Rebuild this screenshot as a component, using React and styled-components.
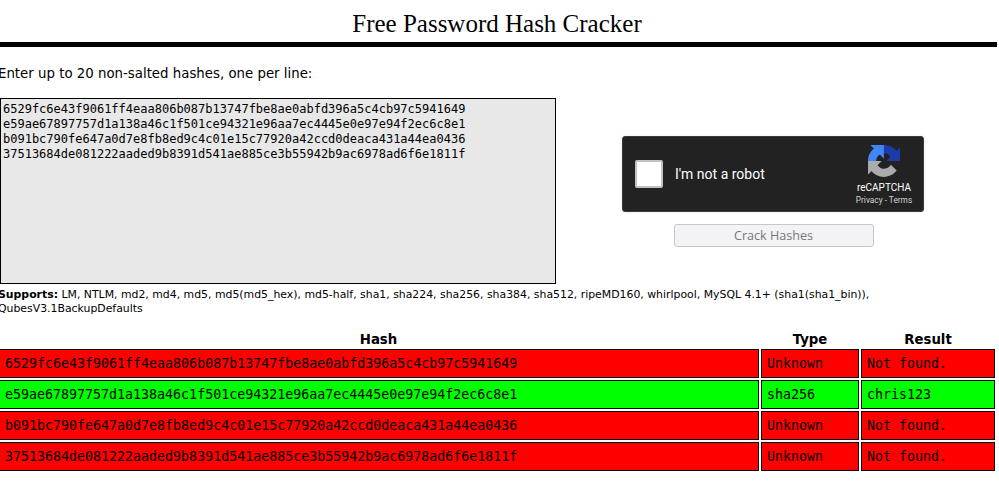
import React from 'react'
import styled, { createGlobalStyle } from 'styled-components'

const GlobalStyle = createGlobalStyle`
  html, body {
    margin: 0;
    padding: 0;
    background: #fff;
    overflow: hidden;
  }
  body {
    font-family: "DejaVu Sans", Verdana, sans-serif;
    color: #000;
  }
`

const Page = styled.div`
  width: 999px;
  height: 482px;
  overflow: hidden;
`

const Title = styled.h1`
  margin: 0;
  padding-top: 7px;
  width: 994px;
  height: 42px;
  box-sizing: border-box;
  font-family: "Liberation Serif", "Times New Roman", serif;
  font-weight: 400;
  font-size: 25px;
  line-height: 34px;
  text-align: center;
`

const Rule = styled.div`
  height: 5px;
  background: #000;
  width: 997px;
`

const Content = styled.div`
  margin-left: -2px;
  width: 999px;
`

const Prompt = styled.p`
  margin: 0;
  padding-top: 19px;
  font-size: 13.33px;
  line-height: 16px;
  height: 51px;
  box-sizing: border-box;
`

const FormRow = styled.div`
  display: flex;
  height: 186px;
`

const HashInput = styled.div`
  margin-left: 2px;
  width: 556px;
  height: 186px;
  box-sizing: border-box;
  border: 1px solid #000;
  background: #e8e8e8;
  padding: 3px 2px;
  font-family: "DejaVu Sans Mono", monospace;
  font-size: 12px;
  line-height: 15px;
  white-space: pre;
`

const SideColumn = styled.div`
  margin-left: 66px;
  padding-top: 38px;
  width: 302px;
  display: flex;
  flex-direction: column;
  align-items: center;
`

const Captcha = styled.div`
  width: 302px;
  height: 76px;
  box-sizing: border-box;
  background: #222;
  border: 1px solid #3a3a3a;
  border-radius: 3px;
  box-shadow: 0 0 4px rgba(0, 0, 0, 0.08);
  display: flex;
  align-items: center;
  font-family: Roboto, sans-serif;
  color: #fff;
`

const CheckBox = styled.div`
  margin-left: 12px;
  width: 28px;
  height: 28px;
  box-sizing: border-box;
  background: #fff;
  border: 2px solid #c1c1c1;
  border-radius: 2px;
`

const CaptchaLabel = styled.span`
  margin-left: 12px;
  font-size: 14px;
  flex: 1;
`

const CaptchaBrand = styled.div`
  width: 70px;
  margin-right: 4px;
  display: flex;
  flex-direction: column;
  align-items: center;
  padding-top: 1px;
`

const BrandName = styled.span`
  font-size: 10px;
  line-height: 12px;
  margin-top: 5px;
`

const BrandLinks = styled.span`
  font-size: 8.3px;
  line-height: 10px;
  margin-top: 1px;
  color: #d0d0d0;
  white-space: nowrap;
`

const CrackButton = styled.button`
  margin-top: 12px;
  margin-left: 1px;
  width: 200px;
  height: 23px;
  box-sizing: border-box;
  background: #f3f3f5;
  border: 1px solid #c8c8cc;
  border-radius: 3px;
  padding: 0;
  font-family: "Open Sans", Lato, sans-serif;
  font-size: 12.6px;
  color: #77777a;
`

const Supports = styled.p`
  margin: 0;
  padding-top: 4px;
  height: 48px;
  box-sizing: border-box;
  font-size: 10.88px;
  line-height: 14px;
`

const ResultTable = styled.table`
  border-collapse: separate;
  border-spacing: 0 2px;
  width: 999px;
  margin-top: -2px;
  table-layout: fixed;
`

const HeadCell = styled.th`
  padding: 0;
  height: 15px;
  font-size: 13.3px;
  line-height: 13px;
  font-weight: 700;
  text-align: center;
`

const Cell = styled.td`
  height: 29px;
  box-sizing: border-box;
  border: 1px solid #000;
  padding: 0 0 1px ${(p) => p.$inset || 5}px;
  background: ${(p) => (p.$found ? '#00ff00' : '#ff0000')};
  font-family: "DejaVu Sans Mono", monospace;
  font-size: 13.3px;
`

const rows = [
  ['6529fc6e43f9061ff4eaa806b087b13747fbe8ae0abfd396a5c4cb97c5941649', 'Unknown', 'Not found.'],
  ['e59ae67897757d1a138a46c1f501ce94321e96aa7ec4445e0e97e94f2ec6c8e1', 'sha256', 'chris123'],
  ['b091bc790fe647a0d7e8fb8ed9c4c01e15c77920a42ccd0deaca431a44ea0436', 'Unknown', 'Not found.'],
  ['37513684de081222aaded9b8391d541ae885ce3b55942b9ac6978ad6f6e1811f', 'Unknown', 'Not found.'],
]

function RecaptchaLogo() {
  return (
    <svg width="32" height="32" viewBox="0 0 64 64">
      <path d="M64 31.955l-.033-1.37V4.687l-7.16 7.16C50.948 4.674 42.033.093 32.05.093c-10.4 0-19.622 4.96-25.458 12.64l11.736 11.86a15.55 15.55 0 0 1 4.754-5.334c2.05-1.6 4.952-2.906 8.968-2.906.485 0 .86.057 1.135.163 4.976.393 9.288 3.14 11.828 7.124l-8.307 8.307 32.294.01" fill="#1c3aa9" />
      <path d="M31.862 0l-1.37.033H4.594l7.16 7.16C4.58 13.052 0 21.967 0 31.95c0 10.4 4.96 19.622 12.64 25.458l11.86-11.736a15.55 15.55 0 0 1-5.334-4.754c-1.6-2.05-2.906-4.952-2.906-8.968 0-.485.057-.86.163-1.135.393-4.976 3.14-9.288 7.124-11.828l8.307 8.307L31.862 0" fill="#4285f4" />
      <path d="M.001 31.955l.033 1.37v25.9l7.16-7.16c5.86 7.173 14.774 11.754 24.76 11.754 10.4 0 19.622-4.96 25.458-12.64l-11.736-11.86a15.55 15.55 0 0 1-4.754 5.334c-2.05 1.6-4.952 2.906-8.968 2.906-.485 0-.86-.057-1.135-.163-4.976-.393-9.288-3.14-11.828-7.124l8.307-8.307-32.294-.01" fill="#ababab" />
    </svg>
  )
}

export default function App() {
  return (
    <Page>
      <GlobalStyle />
      <Title>Free Password Hash Cracker</Title>
      <Rule />
      <Content>
        <Prompt>Enter up to 20 non-salted hashes, one per line:</Prompt>
        <FormRow>
          <HashInput>{rows.map((r) => r[0]).join('\n')}</HashInput>
          <SideColumn>
            <Captcha>
              <CheckBox />
              <CaptchaLabel>I'm not a robot</CaptchaLabel>
              <CaptchaBrand>
                <RecaptchaLogo />
                <BrandName>reCAPTCHA</BrandName>
                <BrandLinks>Privacy - Terms</BrandLinks>
              </CaptchaBrand>
            </Captcha>
            <CrackButton>Crack Hashes</CrackButton>
          </SideColumn>
        </FormRow>
        <Supports>
          <b>Supports:</b> LM, NTLM, md2, md4, md5, md5(md5_hex), md5-half, sha1, sha224, sha256, sha384, sha512, ripeMD160, whirlpool, MySQL 4.1+ (sha1(sha1_bin)), QubesV3.1BackupDefaults
        </Supports>
        <ResultTable>
          <colgroup>
            <col style={{ width: 761 }} />
            <col style={{ width: 2 }} />
            <col style={{ width: 98 }} />
            <col style={{ width: 2 }} />
            <col style={{ width: 134 }} />
            <col />
          </colgroup>
          <thead>
            <tr>
              <HeadCell>Hash</HeadCell>
              <th />
              <HeadCell>Type</HeadCell>
              <th />
              <HeadCell>Result</HeadCell>
              <th />
            </tr>
          </thead>
          <tbody>
            {rows.map((r) => {
              const found = r[1] !== 'Unknown'
              return (
                <tr key={r[0]}>
                  <Cell $found={found} $inset={6}>{r[0]}</Cell>
                  <td />
                  <Cell $found={found}>{r[1]}</Cell>
                  <td />
                  <Cell $found={found}>{r[2]}</Cell>
                  <td />
                </tr>
              )
            })}
          </tbody>
        </ResultTable>
      </Content>
    </Page>
  )
}
